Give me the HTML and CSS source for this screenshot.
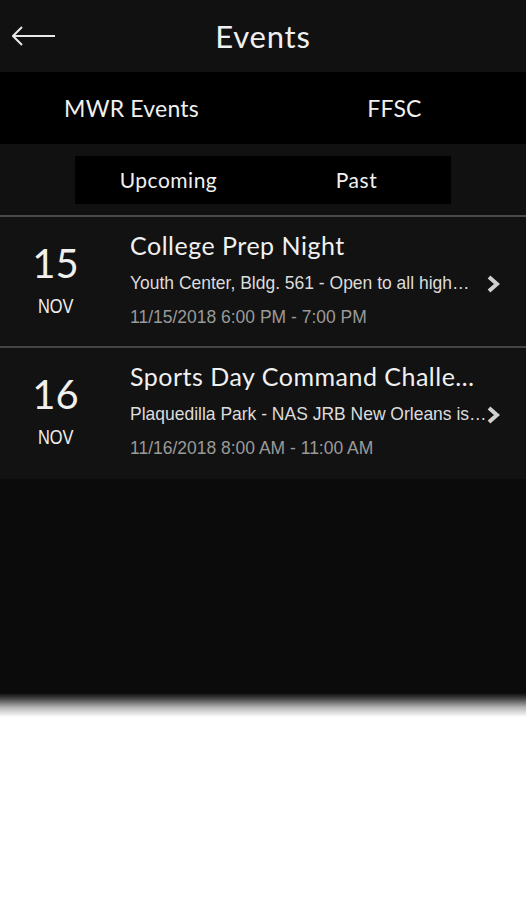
FILE: index.html
```html
<!DOCTYPE html>
<html>
<head>
    <title>Events</title>
    <link rel="stylesheet" href="styles.css">
</head>
<body>
    <div class="screen">
        <div class="header">
            <span class="back">
                <svg width="44" height="20" viewBox="0 0 44 20">
                    <path d="M1 10 H43 M10 1 L1 10 L10 19" fill="none" stroke="#e8e8e8" stroke-width="2"/>
                </svg>
            </span>
            <h1>Events</h1>
        </div>

        <div class="tabs">
            <div class="tab">MWR Events</div>
            <div class="tab">FFSC</div>
        </div>

        <div class="filter">
            <div class="segment">
                <div class="seg-item">Upcoming</div>
                <div class="seg-item">Past</div>
            </div>
        </div>

        <div class="list">
            <div class="event">
                <div class="date">
                    <div class="day">15</div>
                    <div class="month"><span class="narrow">NOV</span></div>
                </div>
                <div class="info">
                    <div class="title">College Prep Night</div>
                    <div class="desc"><span class="narrow">Youth Center, Bldg. 561 - Open to all high…</span></div>
                    <div class="time"><span class="narrow">11/15/2018 6:00 PM - 7:00 PM</span></div>
                </div>
                <svg class="chevron" width="14" height="18" viewBox="0 0 14 18">
                    <path d="M3 2 L11 9 L3 16" fill="none" stroke="#d0d0d0" stroke-width="4"/>
                </svg>
            </div>
            <div class="event">
                <div class="date">
                    <div class="day">16</div>
                    <div class="month"><span class="narrow">NOV</span></div>
                </div>
                <div class="info">
                    <div class="title">Sports Day Command Challe…</div>
                    <div class="desc"><span class="narrow">Plaquedilla Park - NAS JRB New Orleans is…</span></div>
                    <div class="time"><span class="narrow">11/16/2018 8:00 AM - 11:00 AM</span></div>
                </div>
                <svg class="chevron" width="14" height="18" viewBox="0 0 14 18">
                    <path d="M3 2 L11 9 L3 16" fill="none" stroke="#d0d0d0" stroke-width="4"/>
                </svg>
            </div>
        </div>
    </div>
    <div class="fade"></div>
</body>
</html>
```

FILE: styles.css
```css
body {
    margin: 0;
    background-color: #fff;
    font-family: 'Lato', 'Noto Sans', sans-serif;
    color: #f0f0f0;
}

.screen {
    height: 693px;
    background-color: #0b0b0b;
}

/* soft shadow under the dark screen */
.fade {
    height: 24px;
    background: linear-gradient(to bottom, #0b0b0b, rgba(11, 11, 11, 0.75) 25%, rgba(11, 11, 11, 0.3) 60%, rgba(11, 11, 11, 0));
}

.header {
    height: 72px;
    background-color: #111;
    display: flex;
    align-items: center;
    justify-content: center;
    position: relative;
}

.back {
    position: absolute;
    left: 12px;
    top: 26px;
}

h1 {
    margin: 0;
    font-size: 31px;
    font-weight: normal;
    letter-spacing: 0.8px;
}

.tabs {
    height: 72px;
    background-color: #000;
    display: flex;
}

.tab {
    flex: 1;
    display: flex;
    align-items: center;
    justify-content: center;
    font-size: 23px;
    letter-spacing: 0.2px;
}

.filter {
    height: 71px;
    background-color: #111;
    display: flex;
    justify-content: center;
    align-items: center;
    border-bottom: 2px solid #4a4a4a;
}

.segment {
    width: 376px;
    height: 48px;
    margin-left: -1px;
    background-color: #000;
    display: flex;
}

.seg-item {
    flex: 1;
    display: flex;
    align-items: center;
    justify-content: center;
    font-size: 21px;
    letter-spacing: 0.5px;
}

.list {
    background-color: #121212;
}

.event {
    height: 131px;
    box-sizing: border-box;
    padding-top: 13px;
    display: flex;
    align-items: flex-start;
    border-bottom: 2px solid #444;
}

.event:last-child {
    border-bottom: none;
}

.date {
    width: 111px;
    text-align: center;
    padding-top: 11px;
}

.day {
    font-size: 40px;
    line-height: 44px;
}

.month {
    font-family: 'Liberation Sans', sans-serif;
    font-size: 21px;
    line-height: 24px;
    margin-top: 9px;
}

/* condensed look for the small text */
.narrow {
    display: inline-block;
    transform: scaleX(0.92);
    transform-origin: left;
    white-space: nowrap;
}

.month .narrow {
    transform: scaleX(0.78);
    transform-origin: center;
}

.info {
    flex: 1;
    min-width: 0;
    padding-left: 19px;
}

.title {
    font-size: 25px;
    line-height: 30px;
    letter-spacing: 0.5px;
    white-space: nowrap;
}

.desc,
.time {
    font-family: 'Liberation Sans', sans-serif;
    font-size: 19px;
    line-height: 24px;
    white-space: nowrap;
}

.desc {
    color: #dcdcdc;
    margin-top: 11px;
}

.time {
    color: #9a9a9a;
    margin-top: 10px;
}

.chevron {
    margin: 45px 26px 0 0;
    flex-shrink: 0;
}
```
